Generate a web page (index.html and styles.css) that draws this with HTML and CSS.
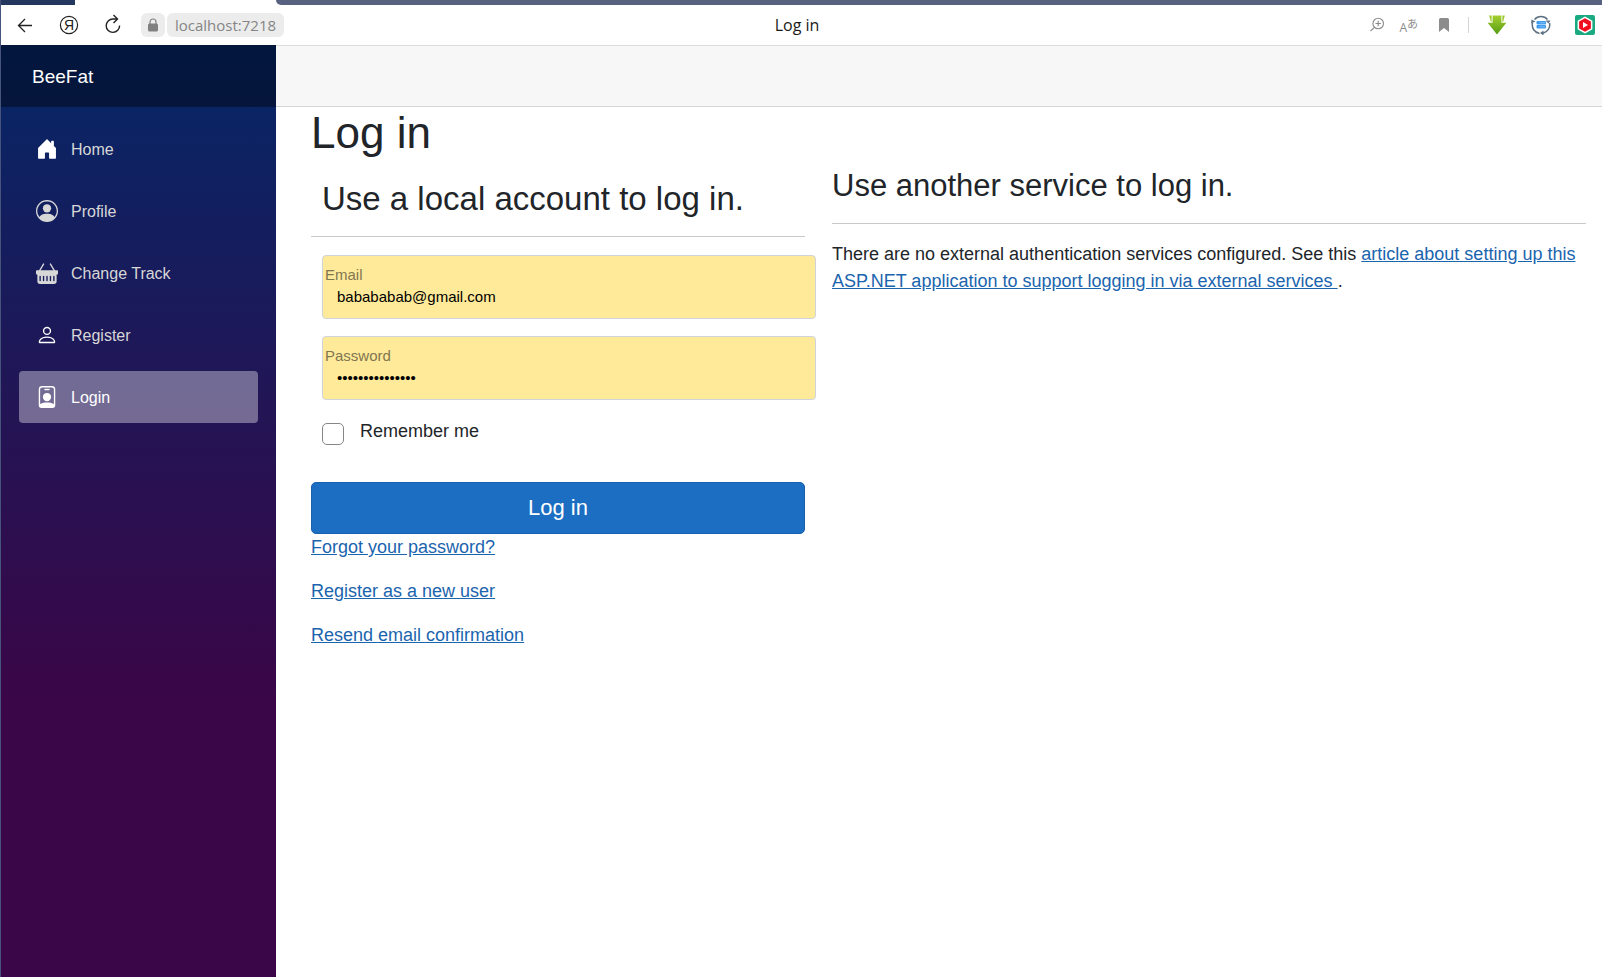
FILE: index.html
```html
<!DOCTYPE html>
<html lang="en">
<head>
<meta charset="utf-8">
<title>Log in</title>
<link rel="stylesheet" href="styles.css">
</head>
<body>
<div class="window">
  <div class="tabs"><span class="tab-before"></span><span class="tab-active"></span><span class="tab-after"></span></div>
  <header class="toolbar">
    <div class="tools-left">
      <button class="tool" aria-label="Back"><svg width="24" height="24" viewBox="0 0 24 24" fill="none" stroke="#222" stroke-width="1.3"><path d="M19 12.500H5.500M12 6l-6.500 6.500L12 19"/></svg></button>
      <button class="tool" aria-label="Yandex"><svg width="24" height="24" viewBox="0 0 24 24"><circle cx="12" cy="12" r="8.600" fill="none" stroke="#222" stroke-width="1.2"/><text x="12" y="17" text-anchor="middle" class="ya">Я</text></svg></button>
      <button class="tool" aria-label="Reload"><svg width="24" height="24" viewBox="0 0 24 24" fill="none" stroke="#222" stroke-width="1.4"><path d="M18.600 12.500A6.700 6.700 0 1 1 12 6h4M12.500 2l4 4-4 4"/></svg></button>
      <div class="address">
        <button class="lock" aria-label="Site information"><svg width="12" height="14" viewBox="0 0 12 14"><path d="M3 6V4a3 3 0 0 1 6 0v2" fill="none" stroke="#808080" stroke-width="1.200"/><rect x="1" y="5.500" width="10" height="8" rx="1.500" fill="#808080"/></svg></button>
        <button class="url">localhost:7218</button>
      </div>
    </div>
    <div class="page-title">Log in</div>
    <div class="tools-right">
      <button class="small-tool" aria-label="Zoom"><svg width="16" height="16" viewBox="0 0 16 16" fill="none" stroke="#8c8c8c" stroke-width="1.100"><circle cx="9.200" cy="6.500" r="5.300"/><path d="M5.400 10.300 1.500 14M9.200 3.800v5.400M6.500 6.500h5.400"/></svg></button>
      <button class="small-tool translate" aria-label="Translate"><span class="latin">A</span><span class="kana">あ</span></button>
      <button class="small-tool bookmark" aria-label="Bookmark"><svg width="12" height="16" viewBox="0 0 12 16"><path d="M1 2.500A1.500 1.500 0 0 1 2.500 1h7A1.500 1.500 0 0 1 11 2.500V15l-5-4-5 4z" fill="#8c8c8c"/></svg></button>
      <span class="divider"></span>
      <button class="ext" aria-label="Downloader"><svg width="20" height="20" viewBox="0 0 20 20"><defs><linearGradient id="g" x1="0" y1="0" x2="0" y2="1"><stop offset="0" stop-color="#a5cf30"/><stop offset="1" stop-color="#559c12"/></linearGradient></defs><path d="M5.600.5h8.800v7.300h5L10 19.500.6 7.800h5z" fill="url(#g)"/><path d="M2.200.5h2.400v6.300H3.800zM17.800.5h-2.400v6.300h.8z" fill="#9cc92c"/></svg></button>
      <button class="ext" aria-label="Sync"><svg width="20" height="20" viewBox="0 0 20 20"><g fill="none" stroke="#5d7183" stroke-width="1.500"><path d="M3.500 4.500A8.500 8.500 0 0 1 16.500 4.500M18.500 8a8.500 8.500 0 0 1-6.500 10.200M8.500 18.400A8.500 8.500 0 0 1 1.500 8"/></g><path d="M14.500 5.500h5l-2 3zM12.500 15.500v5l-3.500-2.500zM0 8.500l.5-4 4 2z" fill="#5d7183"/><rect x="5.500" y="6" width="9.500" height="3.600" rx="1" fill="#3c9af0"/><rect x="5.500" y="10" width="9.500" height="3.600" rx="1" fill="#3c9af0"/><path d="M8.500 7.800H14M8.500 11.800H14" stroke="#a9d5ff" stroke-width=".6"/></svg></button>
      <button class="ext" aria-label="Video"><svg width="20" height="20" viewBox="0 0 20 20"><rect width="20" height="20" rx="2" fill="#1aa981"/><path d="M10 1.500l7.400 4.200v8.600L10 18.500l-7.400-4.200V5.700z" fill="#fff"/><path d="M10 3.200l5.900 3.400v6.800L10 16.800l-5.900-3.400V6.600z" fill="#f00f1e"/><path d="M8 7l5 3-5 3z" fill="#fff"/></svg></button>
    </div>
  </header>
  <div class="app">
    <aside class="sidebar">
      <div class="brand-row"><a class="brand" href="#">BeeFat</a></div>
      <nav class="nav">
        <a class="nav-link" href="#"><svg class="icon bright" viewBox="0 0 16 16"><path d="M6.500 14.500v-3.505c0-.245.25-.495.5-.495h2c.25 0 .5.25.5.5v3.500a.5.5 0 0 0 .5.5h4a.5.5 0 0 0 .5-.5v-7a.5.5 0 0 0-.146-.354L13 5.793V2.500a.5.5 0 0 0-.5-.5h-1a.5.5 0 0 0-.5.5v1.293L8.354 1.146a.5.5 0 0 0-.708 0l-6 6A.5.5 0 0 0 1.500 7.500v7a.5.5 0 0 0 .5.5h4a.5.5 0 0 0 .5-.5Z"/></svg>Home</a>
        <a class="nav-link" href="#"><svg class="icon" viewBox="0 0 16 16"><path d="M11 6a3 3 0 1 1-6 0 3 3 0 0 1 6 0z"/><path fill-rule="evenodd" d="M0 8a8 8 0 1 1 16 0A8 8 0 0 1 0 8zm8-7a7 7 0 0 0-5.468 11.370C3.242 11.226 4.805 10 8 10s4.757 1.225 5.468 2.370A7 7 0 0 0 8 1z"/></svg>Profile</a>
        <a class="nav-link" href="#"><svg class="icon" viewBox="0 0 16 16"><path fill-rule="evenodd" d="M5.071 1.243a.5.5 0 0 1 .858.514L3.383 6h9.234L10.070 1.757a.5.5 0 1 1 .858-.514L13.783 6H15.500a.5.5 0 0 1 .5.5v2a.5.5 0 0 1-.5.5H15v5a2 2 0 0 1-2 2H3a2 2 0 0 1-2-2V9H.5a.5.5 0 0 1-.5-.5v-2A.5.5 0 0 1 .5 6h1.717zM3.500 10.500a.5.5 0 1 0-1 0v3a.5.5 0 0 0 1 0zm2.500 0a.5.5 0 1 0-1 0v3a.5.5 0 0 0 1 0zm2.500 0a.5.5 0 1 0-1 0v3a.5.5 0 0 0 1 0zm2.500 0a.5.5 0 1 0-1 0v3a.5.5 0 0 0 1 0zm2.500 0a.5.5 0 1 0-1 0v3a.5.5 0 0 0 1 0z"/></svg>Change Track</a>
        <a class="nav-link" href="#"><svg class="icon bright" viewBox="0 0 16 16"><path d="M8 8a3 3 0 1 0 0-6 3 3 0 0 0 0 6Zm2-3a2 2 0 1 1-4 0 2 2 0 0 1 4 0Zm4 8c0 1-1 1-1 1H3s-1 0-1-1 1-4 6-4 6 3 6 4Zm-1-.004c-.001-.246-.154-.986-.832-1.664C11.516 10.680 10.289 10 8 10c-2.290 0-3.516.68-4.168 1.332-.678.678-.83 1.418-.832 1.664h10Z"/></svg>Register</a>
        <a class="nav-link active" href="#" aria-current="page"><svg class="icon bright" viewBox="0 0 16 16"><path d="M6.500 2a.5.5 0 0 0 0 1h3a.5.5 0 0 0 0-1h-3zM11 8a3 3 0 1 1-6 0 3 3 0 0 1 6 0z"/><path d="M4.500 0A2.500 2.500 0 0 0 2 2.500V14a2 2 0 0 0 2 2h8a2 2 0 0 0 2-2V2.500A2.500 2.500 0 0 0 11.500 0h-7zM3 2.500A1.500 1.500 0 0 1 4.500 1h7A1.500 1.500 0 0 1 13 2.500v10.795a4.200 4.200 0 0 0-.776-.492C11.392 12.387 10.063 12 8 12s-3.392.387-4.224.803a4.200 4.200 0 0 0-.776.492V2.500z"/></svg>Login</a>
      </nav>
    </aside>
    <main class="main">
      <div class="top-row"></div>
      <article class="content">
        <h1>Log in</h1>
        <div class="columns">
          <section>
            <form>
              <h2>Use a local account to log in.</h2>
              <hr>
              <div class="field">
                <input id="email" type="email" value="babababab@gmail.com">
                <label for="email">Email</label>
              </div>
              <div class="field">
                <input id="password" type="password" value="honeybee-secret">
                <label for="password">Password</label>
              </div>
              <div class="remember">
                <input id="remember" type="checkbox">
                <label for="remember">Remember me</label>
              </div>
              <button class="submit" type="button">Log in</button>
              <div class="links">
                <p><a href="#">Forgot your password?</a></p>
                <p><a href="#">Register as a new user</a></p>
                <p><a href="#">Resend email confirmation</a></p>
              </div>
            </form>
          </section>
          <section>
            <h3>Use another service to log in.</h3>
            <hr>
            <p>There are no external authentication services configured. See this <a href="#">article about setting up this ASP.NET application to support logging in via external services </a>.</p>
          </section>
        </div>
      </article>
    </main>
  </div>
</div>
</body>
</html>
```
FILE: styles.css
```css
* { box-sizing: border-box; }

body {
  margin: 0;
  background: #fff;
  color: #212529;
  font-family: "Liberation Sans", Arial, sans-serif;
  font-size: 18px;
  line-height: 27px;
}

h1, h2, h3, p { margin: 0; font-weight: 400; }
button { padding: 0; border: 0; background: none; font-family: inherit; }
svg { display: block; }

.window {
  display: flex;
  flex-direction: column;
  min-height: 100vh;
  border-left: 1px solid #46547c;
}

/* Browser chrome */
.tabs { display: flex; height: 5px; background: #fff; }
.tab-before { width: 74px; background: #24375f; }
.tab-active { width: 201px; }
.tab-after {
  flex: 1;
  border-bottom-left-radius: 5px;
  background: #56627f;
}

.toolbar {
  display: grid;
  grid-template-columns: 1fr auto 1fr;
  align-items: center;
  height: 41px;
  padding: 0 7px 0 12px;
  border-bottom: 1px solid #dcdcdc;
  font-family: "Open Sans", "Noto Sans", sans-serif;
}
.tools-left { display: flex; align-items: center; gap: 20px; }
.tool { width: 24px; height: 24px; }
.ya { font-family: "Liberation Sans", sans-serif; font-size: 14px; fill: #222; }
.address { display: flex; gap: 2px; margin-left: -4px; }
.lock, .url { height: 24px; border-radius: 6px; background: #ececec; }
.lock { display: grid; place-items: center; width: 24px; }
.url {
  padding: 0 8px;
  color: #858585;
  font-family: "Open Sans", "Noto Sans", sans-serif;
  font-size: 15px;
  line-height: 24px;
}
.page-title { margin-right: 14px; color: #1a1a1a; font-size: 16px; line-height: 24px; }
.tools-right { display: flex; align-items: center; justify-content: flex-end; gap: 24px; }
.small-tool { color: #8c8c8c; }
.translate {
  display: flex;
  align-items: center;
  margin-left: -10px;
  line-height: 16px;
}
.latin { padding-top: 5px; font-size: 12px; }
.kana { padding-bottom: 4px; font-family: "Noto Sans CJK JP", sans-serif; font-size: 11px; }
.bookmark { margin-left: -4px; }
.divider { width: 1px; height: 16px; margin: 0 -6px; background: #d5d5d5; }

/* Application shell */
.app { display: flex; flex: 1; margin-top: -1px; }
.sidebar {
  flex: 0 0 275px;
  background: linear-gradient(180deg, #052767 0%, #3a0647 70%);
}
.brand-row {
  display: flex;
  align-items: center;
  height: 62px;
  padding: 0 31px;
  background: rgba(0, 0, 0, .4);
}
.brand { color: #fff; font-size: 19px; text-decoration: none; }
.nav { display: flex; flex-direction: column; gap: 10px; padding: 16px 18px; }
.nav-link {
  display: flex;
  align-items: center;
  gap: 13px;
  height: 52px;
  padding: 0 17px;
  border-radius: 4px;
  color: #d7d7d7;
  font-size: 16px;
  text-decoration: none;
}
.nav-link.active { background: rgba(255, 255, 255, .37); color: #fff; }
.icon { width: 22px; height: 22px; fill: #d7d7d7; }
.icon.bright { fill: #fff; }

.main { flex: 1; min-width: 0; }
.top-row {
  height: 62px;
  border-top: 1px solid #dcdcdc;
  border-bottom: 1px solid #d6d5d5;
  background: #f7f7f7;
}
.content { padding: 0 16px 0 35px; }
h1 { font-size: 44px; line-height: 52px; }
h2 { padding: 21px 11px 0; font-size: 33px; line-height: 38px; }
h3 { padding-top: 8px; font-size: 31px; line-height: 38px; }
hr { height: 1px; margin: 18px 0; border: 0; background: #c8c9ca; }
h3 + hr { margin-bottom: 17px; }

.columns { display: grid; grid-template-columns: 19fr 29fr; gap: 27px; }
a { color: #1b64ae; }

/* Sign-in form */
.field { position: relative; margin: 0 -11px 17px 11px; }
.field input {
  display: block;
  width: 100%;
  height: 64px;
  padding: 19px 14px 0;
  border: 1px solid #ced4da;
  border-radius: 4px;
  background: #ffea9a;
  color: #000;
  font-family: inherit;
  font-size: 15px;
}
.field label {
  position: absolute;
  top: 8px;
  left: 3px;
  color: #7f7650;
  font-size: 15px;
  line-height: 24px;
}
.remember { display: flex; gap: 16px; padding: 1px 0 0 11px; margin-bottom: 37px; }
.remember input {
  appearance: none;
  width: 22px;
  height: 22px;
  margin: 5px 0 0;
  border: 1px solid #868686;
  border-radius: 5px;
  background: #fff;
}
.submit {
  display: block;
  width: 100%;
  height: 52px;
  border: 1px solid #1861ac;
  border-radius: 5px;
  background: #1b6ec2;
  color: #fff;
  font-size: 22px;
}
.links { display: flex; flex-direction: column; gap: 17px; }
```
